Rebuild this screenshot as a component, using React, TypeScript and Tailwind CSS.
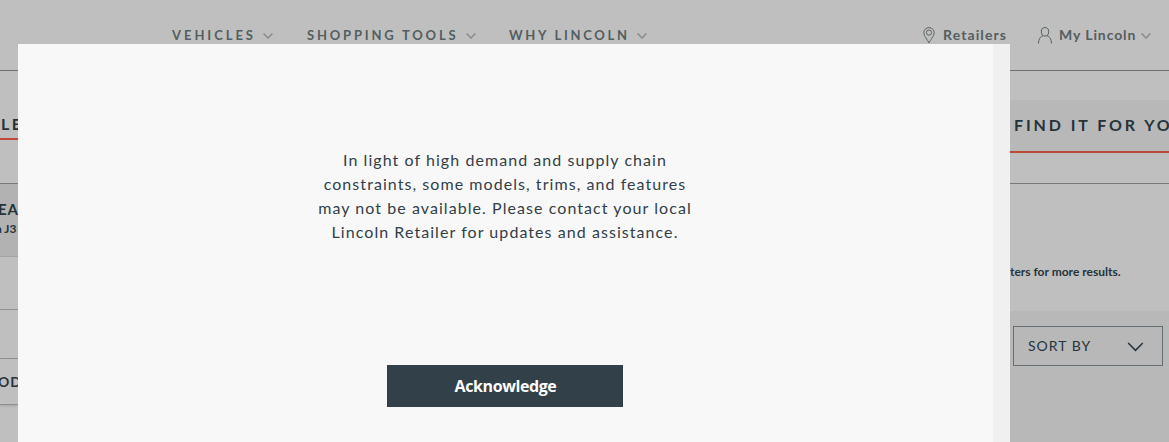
import React from "react";

type ChevronProps = {
  className: string;
  strokeWidth?: number;
};

function Chevron({ className, strokeWidth = 1.4 }: ChevronProps): React.JSX.Element {
  return (
    <svg viewBox="0 0 10 6" fill="none" stroke="currentColor" strokeWidth={strokeWidth} className={className}>
      <path d="M0.6 0.6 L5 5 L9.4 0.6" />
    </svg>
  );
}

function PinIcon(): React.JSX.Element {
  return (
    <svg viewBox="0 0 12 17" fill="none" stroke="currentColor" strokeWidth="0.9" className="h-[17px] w-3 shrink-0">
      <path d="M6 16 C4.8 12.8 0.8 9.4 0.8 5.8 A5.2 5.2 0 0 1 11.2 5.8 C11.2 9.4 7.2 12.8 6 16 Z" />
      <circle cx="6" cy="5.6" r="2.6" />
    </svg>
  );
}

function UserIcon(): React.JSX.Element {
  return (
    <svg viewBox="0 0 14 17" fill="none" stroke="currentColor" strokeWidth="1" className="h-[17px] w-3.5 shrink-0">
      <ellipse cx="7" cy="4.8" rx="3.7" ry="4.2" />
      <path d="M0.5 16.5 C0.7 11.8 2.4 9.6 5 8.7 M9 8.7 C11.6 9.6 13.3 11.8 13.5 16.5" />
    </svg>
  );
}

function Header(): React.JSX.Element {
  const navClass: string = "flex items-center justify-between whitespace-nowrap text-[13px] font-bold text-[#535e60]";
  const chevronClass: string = "h-1.5 w-2.5 text-[#848989]";

  return (
    <header className="flex h-[71px] border-b border-[#6d7070] text-[#535e60]">
      <nav className="ml-[172px] flex h-[71px] items-center">
        <a className={`${navClass} w-[101px] tracking-[2.95px]`}>
          VEHICLES <Chevron className={chevronClass} />
        </a>
        <a className={`${navClass} ml-[34px] w-[169px] tracking-[2.8px]`}>
          SHOPPING TOOLS <Chevron className={chevronClass} />
        </a>
        <a className={`${navClass} ml-[33px] w-[138px] tracking-[2.7px]`}>
          WHY LINCOLN <Chevron className={chevronClass} />
        </a>
      </nav>
      <div className="ml-[276px] flex h-[68px] items-center text-[14px] font-bold whitespace-nowrap">
        <div className="flex w-[115px] items-center gap-2">
          <span className="mt-[3px]"><PinIcon /></span>
          <span className="tracking-[1.1px]">Retailers</span>
        </div>
        <div className="flex items-center">
          <span className="mt-[3px]"><UserIcon /></span>
          <span className="ml-[7px] w-[82px] tracking-[0.9px]">My Lincoln</span>
          <Chevron className={`${chevronClass} mt-[3px]`} />
        </div>
      </div>
    </header>
  );
}

function Filters(): React.JSX.Element {
  return (
    <aside className="w-[18px] overflow-hidden whitespace-nowrap font-bold text-[#26343a]">
      <div className="h-[113px] border-b border-[#777979]">
        <div className="h-[69px] border-b-2 border-[#bd4a37] pt-[41px] pl-px text-[16px] leading-6 tracking-[2.4px]">LE</div>
      </div>
      <div className="h-[73px] border-b border-[#a4a4a4] bg-[#b2b2b2] pt-[15px]">
        <div className="-ml-0.5 text-[15px] leading-5 tracking-[0.8px]">EA</div>
        <div className="-ml-[5px] text-[12px] leading-5">n J3</div>
      </div>
      <div className="h-[53px] border-b border-[#929292]" />
      <div className="h-[49px] border-b border-[#929292]" />
      <div className="h-[46px] border-b border-[#8e8e8e] pt-[13px] shadow-sm">
        <div className="-ml-0.5 text-[14px] leading-5 tracking-[1px]">OD</div>
      </div>
    </aside>
  );
}

function Results(): React.JSX.Element {
  return (
    <section className="w-[159px] overflow-hidden whitespace-nowrap text-[#26343a]">
      <div className="h-[113px] border-b border-[#777979] pt-[29px]">
        <div className="h-[53px] border-b-2 border-[#bd4a37] bg-[#b8b8b8] pt-[13px] pl-1 text-[16px] leading-6 font-bold tracking-[2.9px]">
          FIND IT FOR YOU
        </div>
      </div>
      <div className="h-[127px] pt-[78px] text-[12px] leading-5 font-bold">ters for more results.</div>
      <div className="h-[131px] bg-[#b8b8b8] pt-[15px] pl-[3px]">
        <button className="flex h-10 w-[150px] items-center justify-between border border-[#657074] pr-[18px] pb-px pl-[14px] text-[14px] tracking-[1px]">
          SORT BY
          <Chevron className="mt-[3px] h-[10px] w-[17px]" strokeWidth={0.9} />
        </button>
      </div>
    </section>
  );
}

function NoticeDialog(): React.JSX.Element {
  const lines: string[] = [
    "In light of high demand and supply chain",
    "constraints, some models, trims, and features",
    "may not be available. Please contact your local",
    "Lincoln Retailer for updates and assistance.",
  ];

  return (
    <div role="dialog" className="absolute top-11 left-[18px] flex h-[398px] w-[992px] bg-[#f8f8f8]">
      <div className="flex w-[974px] flex-col items-center pt-[104px]">
        <p className="text-center text-[16px] leading-6 tracking-[1.06px] whitespace-nowrap text-[#324048]">
          {lines.map((line) => (
            <span key={line} className="block">{line}</span>
          ))}
        </p>
        <button className="mt-[121px] h-[42px] w-[236px] bg-[#324049] pl-px font-['Open_Sans',sans-serif] text-[16px] font-bold tracking-[-0.4px] text-white">
          Acknowledge
        </button>
      </div>
      <div className="ml-px w-[17px] bg-[#f0f0f0]" />
    </div>
  );
}

export default function App(): React.JSX.Element {
  return (
    <div className="relative h-[442px] w-[1169px] overflow-hidden bg-[#bfbfbf] font-['Lato',sans-serif]">
      <Header />
      <main className="flex justify-between">
        <Filters />
        <Results />
      </main>
      <NoticeDialog />
    </div>
  );
}
